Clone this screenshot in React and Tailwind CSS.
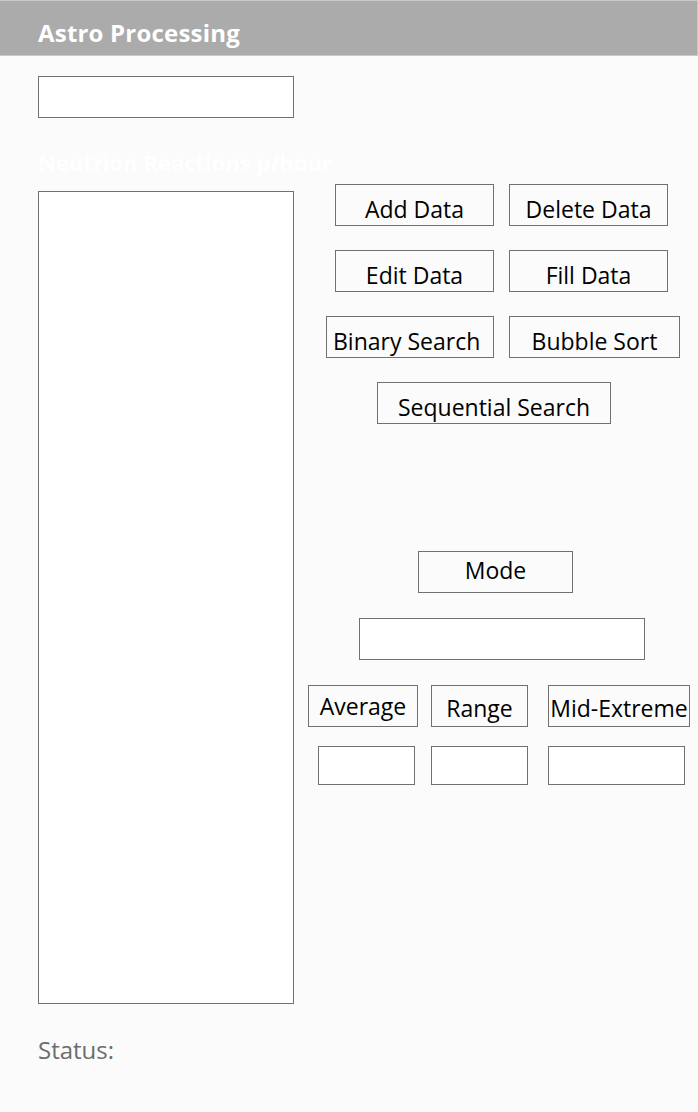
import React from 'react';

const Btn = ({ label, className = '' }) => (
  <button className={`h-[42px] border border-[#707070] bg-transparent text-[23px] leading-none text-black flex items-center justify-center whitespace-nowrap overflow-hidden ${className}`}>
    {label}
  </button>
);

const Box = ({ className = '' }) => (
  <div className={`border border-[#707070] bg-white ${className}`} />
);

const App = () => {
  return (
    <div className="w-[698px] h-[1112px] bg-[#fbfbfb] overflow-hidden font-['Open_Sans',sans-serif]">
      <div className="h-[56px] bg-[#ababab] border-t border-r border-b border-[#c9c9c9] flex items-center pl-[38px]">
        <h1 className="text-white font-bold text-[24px] leading-none pt-[9px] tracking-[0.2px]">Astro Processing</h1>
      </div>

      <div className="flex">
        {/* left column */}
        <div className="ml-[38px] w-[256px] flex flex-col">
          <Box className="mt-[20px] w-[256px] h-[42px]" />
          <div className="mt-[29px] h-[44px] text-white font-bold text-[22px] leading-[30px] whitespace-nowrap">
            Neutrion Reactions p/hour
          </div>
          <Box className="w-[256px] h-[813px]" />
          <div className="mt-[34px] text-[#6d6d6d] text-[24px] leading-none">Status:</div>
        </div>

        {/* right column */}
        <div className="ml-[14px] flex flex-col">
          <div className="mt-[128px] ml-[27px] flex gap-[15px]">
            <Btn label="Add Data" className="w-[159px] pt-[8px]" />
            <Btn label="Delete Data" className="w-[159px] pt-[9px]" />
          </div>
          <div className="mt-[24px] ml-[27px] flex gap-[15px]">
            <Btn label="Edit Data" className="w-[159px] pt-[8px]" />
            <Btn label="Fill Data" className="w-[159px] pt-[8px]" />
          </div>
          <div className="mt-[24px] ml-[18px] flex gap-[15px]">
            <Btn label="Binary Search" className="w-[168px] justify-start pl-[6px] pt-[8px]" />
            <Btn label="Bubble Sort" className="w-[171px] pt-[8px]" />
          </div>
          <div className="mt-[24px] ml-[69px] flex">
            <Btn label="Sequential Search" className="w-[234px] pt-[8px]" />
          </div>

          <div className="mt-[127px] ml-[110px] flex">
            <Btn label="Mode" className="w-[155px] pb-[3px]" />
          </div>
          <div className="mt-[25px] ml-[51px] flex">
            <Box className="w-[286px] h-[42px]" />
          </div>
          <div className="mt-[25px] flex">
            <Btn label="Average" className="w-[110px]" />
            <Btn label="Range" className="ml-[13px] w-[97px] pt-[4px]" />
            <Btn label="Mid-Extreme" className="ml-[20px] w-[142px] pt-[4px]" />
          </div>
          <div className="mt-[19px] flex">
            <Box className="ml-[10px] w-[97px] h-[39px]" />
            <Box className="ml-[16px] w-[97px] h-[39px]" />
            <Box className="ml-[20px] w-[137px] h-[39px]" />
          </div>
        </div>
      </div>
    </div>
  );
};

export default App;
